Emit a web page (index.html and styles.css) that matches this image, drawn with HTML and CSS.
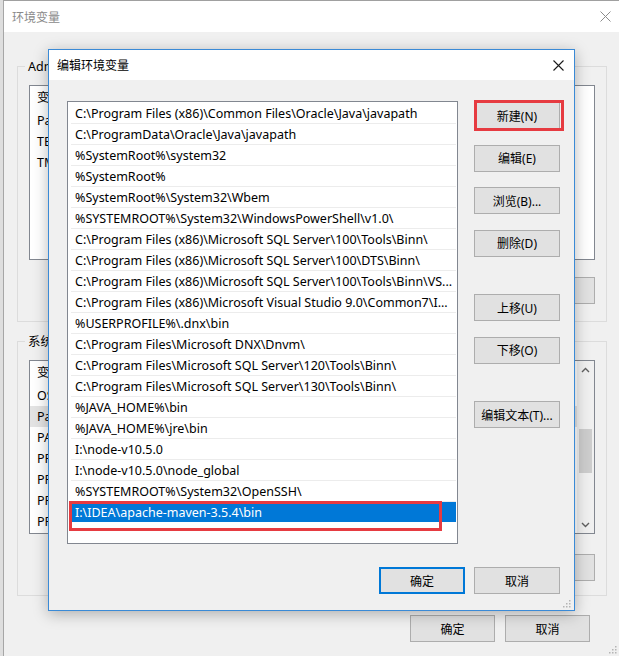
FILE: index.html
```
<!DOCTYPE html>
<html lang="zh">
<head>
<meta charset="utf-8">
<title>编辑环境变量</title>
<link rel="stylesheet" href="styles.css">
</head>
<body>
<div class="desk">
  <div class="behind"></div>
  <div class="bgwin">
    <div class="bg-title">
      <span>环境变量</span>
      <svg class="bg-close" width="11" height="11" viewBox="0 0 11 11"><path d="M0.5 0.5L10.5 10.5M10.5 0.5L0.5 10.5" stroke="#8c8c8c" stroke-width="1" fill="none"/></svg>
    </div>
    <div class="bg-body">
      <div class="group g1">
        <div class="glabel">Administrator 的用户变量(U)</div>
        <div class="blist l1">
          <div class="bcol">
            <div class="bhead">变量</div>
            <div class="brow">Path</div>
            <div class="brow">TEMP</div>
            <div class="brow">TMP</div>
          </div>
        </div>
        <div class="gbtns b1"><button class="wbtn">删除(D)</button></div>
      </div>
      <div class="group g2">
        <div class="glabel">系统变量(S)</div>
        <div class="blist l2">
          <div class="bcol">
            <div class="bhead">变量</div>
            <div class="brow">OS</div>
            <div class="brow sel">Path</div>
            <div class="brow">PATHEXT</div>
            <div class="brow">PROCESSOR_ARCHITECTURE</div>
            <div class="brow">PROCESSOR_IDENTIFIER</div>
            <div class="brow">PROCESSOR_LEVEL</div>
            <div class="brow">PROCESSOR_REVISION</div>
          </div>
          <div class="vscroll">
            <div class="arrow"><svg width="9" height="6" viewBox="0 0 9 6"><path d="M1 5L4.5 1.5L8 5" stroke="#606060" stroke-width="1.4" fill="none"/></svg></div>
            <div class="track"><div class="thumb"></div></div>
            <div class="arrow"><svg width="9" height="6" viewBox="0 0 9 6"><path d="M1 1L4.5 4.5L8 1" stroke="#606060" stroke-width="1.4" fill="none"/></svg></div>
          </div>
        </div>
        <div class="gbtns b2"><button class="wbtn">删除(L)</button></div>
      </div>
      <div class="bg-foot">
        <button class="wbtn big">确定</button>
        <button class="wbtn big">取消</button>
      </div>
    </div>
    <svg class="grip bg-grip" width="8" height="8" viewBox="0 0 8 8"><g fill="#b4b4b4"><rect x="6" y="0" width="1.5" height="1.5"/><rect x="3" y="3" width="1.5" height="1.5"/><rect x="6" y="3" width="1.5" height="1.5"/><rect x="0" y="6" width="1.5" height="1.5"/><rect x="3" y="6" width="1.5" height="1.5"/><rect x="6" y="6" width="1.5" height="1.5"/></g></svg>
  </div>

  <div class="dlg">
    <div class="dlg-title">
      <span>编辑环境变量</span>
      <svg class="dlg-close" width="11" height="11" viewBox="0 0 11 11"><path d="M0.5 0.5L10.5 10.5M10.5 0.5L0.5 10.5" stroke="#1a1a1a" stroke-width="1.1" fill="none"/></svg>
    </div>
    <div class="dlg-body">
      <div class="dlg-main">
        <div class="plist">
          <div class="prow">C:\Program Files (x86)\Common Files\Oracle\Java\javapath</div>
          <div class="prow">C:\ProgramData\Oracle\Java\javapath</div>
          <div class="prow">%SystemRoot%\system32</div>
          <div class="prow">%SystemRoot%</div>
          <div class="prow">%SystemRoot%\System32\Wbem</div>
          <div class="prow">%SYSTEMROOT%\System32\WindowsPowerShell\v1.0\</div>
          <div class="prow">C:\Program Files (x86)\Microsoft SQL Server\100\Tools\Binn\</div>
          <div class="prow">C:\Program Files (x86)\Microsoft SQL Server\100\DTS\Binn\</div>
          <div class="prow">C:\Program Files (x86)\Microsoft SQL Server\100\Tools\Binn\VS...</div>
          <div class="prow">C:\Program Files (x86)\Microsoft Visual Studio 9.0\Common7\I...</div>
          <div class="prow">%USERPROFILE%\.dnx\bin</div>
          <div class="prow">C:\Program Files\Microsoft DNX\Dnvm\</div>
          <div class="prow">C:\Program Files\Microsoft SQL Server\120\Tools\Binn\</div>
          <div class="prow">C:\Program Files\Microsoft SQL Server\130\Tools\Binn\</div>
          <div class="prow">%JAVA_HOME%\bin</div>
          <div class="prow">%JAVA_HOME%\jre\bin</div>
          <div class="prow">I:\node-v10.5.0</div>
          <div class="prow">I:\node-v10.5.0\node_global</div>
          <div class="prow">%SYSTEMROOT%\System32\OpenSSH\</div>
          <div class="prow sel">I:\IDEA\apache-maven-3.5.4\bin<span class="mark"></span></div>
        </div>
        <div class="pbtns">
          <div class="hl"><button class="wbtn">新建(N)</button></div>
          <button class="wbtn">编辑(E)</button>
          <button class="wbtn">浏览(B)...</button>
          <button class="wbtn">删除(D)</button>
          <button class="wbtn sep">上移(U)</button>
          <button class="wbtn">下移(O)</button>
          <button class="wbtn sep">编辑文本(T)...</button>
        </div>
      </div>
      <div class="dlg-foot">
        <button class="wbtn ok">确定</button>
        <button class="wbtn">取消</button>
      </div>
    </div>
    <svg class="grip dlg-grip" width="8" height="8" viewBox="0 0 8 8"><g fill="#b4b4b4"><rect x="6" y="0" width="1.5" height="1.5"/><rect x="3" y="3" width="1.5" height="1.5"/><rect x="6" y="3" width="1.5" height="1.5"/><rect x="0" y="6" width="1.5" height="1.5"/><rect x="3" y="6" width="1.5" height="1.5"/><rect x="6" y="6" width="1.5" height="1.5"/></g></svg>
  </div>
</div>
</body>
</html>
```
FILE: styles.css
```
* { box-sizing: border-box; }
html, body { margin: 0; padding: 0; }
body {
  width: 619px;
  height: 656px;
  overflow: hidden;
  background: #f0f0f0;
  font-family: "Noto Sans", "Noto Sans CJK SC", sans-serif;
  font-size: 12px;
  color: #000;
}
.desk { position: relative; width: 619px; height: 656px; overflow: hidden; background: #f0f0f0; }

.behind {
  position: absolute; left: 0; top: 0; width: 3px; height: 656px;
  background: #dedede;
}

/* background window */
.bgwin {
  position: absolute; left: 3px; top: 0; width: 616px; height: 656px;
  border-left: 1px solid #a6a6a6;
  border-top: 1px solid #a0a0a0;
  background: #f0f0f0;
}
.bg-title {
  height: 31px; background: #fff;
  display: flex; align-items: center; justify-content: space-between;
  padding-left: 8px; padding-right: 8px;
  color: #8a8a8a; font-size: 12px;
}
.bg-body { padding: 0 12px 0 13px; }
.group {
  border: 1px solid #dcdcdc;
  padding: 0 11px;
}
.g1 { margin-top: 34px; height: 256px; }
.g2 { margin-top: 19px; height: 255px; }
.glabel {
  display: block; width: fit-content;
  height: 16px; line-height: 16px; margin-top: -8px; margin-left: -4px;
  padding: 0 0 0 3px; background: #f0f0f0;
  white-space: nowrap; font-size: 12.5px;
}
.blist {
  display: flex;
  background: #fff; border: 1px solid #828790;
  overflow: hidden;
  font-size: 12.5px;
}
.l1 { margin-top: 10px; height: 175px; }
.l2 { margin-top: 10px; height: 174px; }
.bcol { flex: 1; }
.bhead { height: 24px; line-height: 24px; padding-left: 7px; }
.brow { height: 21px; line-height: 21px; padding-left: 7px; white-space: nowrap; }
.brow.sel { background: #e3e3e3; }
.vscroll {
  width: 17px; background: #f0f0f0;
  display: flex; flex-direction: column;
}
.arrow { height: 17px; display: flex; align-items: center; justify-content: center; }
.track { flex: 1; padding: 0 2px; }
.thumb { margin-top: 51px; height: 44px; background: #cdcdcd; }
.gbtns { display: flex; justify-content: flex-end; }
.b1 { margin-top: 17px; }
.b2 { margin-top: 20px; }
.bg-foot {
  display: flex; justify-content: flex-end; gap: 10px;
  margin-top: 19px; padding-right: 17px;
}
.wbtn {
  width: 86px; height: 27px; padding: 0; margin: 0;
  background: #e1e1e1; border: 1px solid #adadad;
  font-family: "Noto Sans", "Noto Sans CJK SC", sans-serif;
  font-size: 12px; color: #000;
}
.big { width: 85px; }
.b1 .wbtn, .b2 .wbtn { width: 90px; height: 27px; }
.grip { position: absolute; }
.bg-grip { right: 2px; bottom: 2px; }

/* dialog */
.dlg {
  position: absolute; left: 48px; top: 49px; width: 527px; height: 562px;
  border: 1px solid #3a8ad6;
  background: #f0f0f0;
  box-shadow: 0 3px 14px rgba(0, 0, 0, 0.28);
}
.dlg-title {
  height: 30px; background: #fff;
  display: flex; align-items: center; justify-content: space-between;
  padding-left: 8px; padding-right: 10px;
  font-size: 12px;
}
.dlg-body { padding: 21px 14px 0 18px; }
.dlg-main { display: flex; gap: 16px; }
.plist {
  width: 392px; height: 443px;
  border: 1px solid #828790; background: #fff;
  padding-top: 1px;
  overflow: hidden;
  font-size: 12.5px;
}
.prow {
  position: relative;
  height: 21px; line-height: 21px;
  margin: 0 1px 0 3px; padding-left: 4px;
  border-bottom: 1px solid #ececec;
  white-space: nowrap;
}
.prow.sel { background: #0078d7; color: #fff; border-bottom-color: #fff; }
.mark {
  position: absolute; left: -2px; top: -1px; width: 373px; height: 30px;
  border: 3px solid #e63b41;
}
.pbtns {
  display: flex; flex-direction: column; gap: 15.5px;
  width: 86px; padding-top: 1px;
}
.sep { margin-top: 22px; }
.hl { position: relative; height: 27px; }
.hl::after {
  content: ""; position: absolute; top: -2px; left: 0; right: -4px; bottom: -2px;
  border: 3px solid #e63b41;
}
.dlg-foot { display: flex; justify-content: flex-end; gap: 9px; margin-top: 23px; }
.ok { border-color: #0078d7; box-shadow: inset 0 0 0 1px #0078d7; }
.dlg-grip { right: 3px; bottom: 2px; }
```
